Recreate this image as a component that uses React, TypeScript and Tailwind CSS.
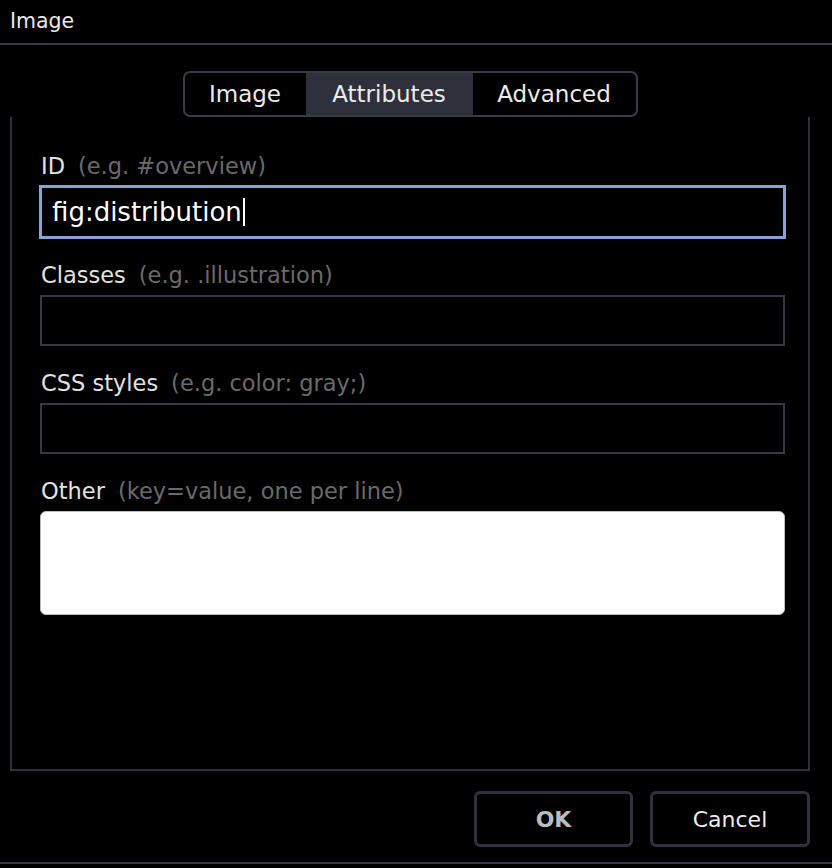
const font = { fontFamily: '"DejaVu Sans", "Liberation Sans", sans-serif' };

const tabs = [
  { label: "Image", w: "w-[121px]", active: false },
  { label: "Attributes", w: "w-[167px]", active: true },
  { label: "Advanced", w: "w-[163px]", active: false },
];

const Label = ({ name, hint }: { name: string; hint: string }) => (
  <div className="h-[28px] leading-[28px] mb-[6px] pl-[1px] text-[22.5px] whitespace-nowrap">
    <span className="text-[#e2e2e2]">{name}</span>
    <span className="ml-[13px] text-[#6a6a6a]">{hint}</span>
  </div>
);

const App = () => {
  return (
    <div className="w-[832px] h-[868px] bg-black overflow-hidden" style={font}>
      {/* title bar */}
      <div className="h-[45px] border-b-2 border-[#383946] pl-[10px] pt-[6px] text-[20.5px] text-[#e8e8e8]">
        Image
      </div>

      <div className="ml-[10px] w-[800px] pt-[26px]">
        <div className="flex justify-center">
          <div className="flex h-[46px] rounded-[7px] border-2 border-[#3a3b47] overflow-hidden">
            {tabs.map((t) => (
              <div
                key={t.label}
                className={`${t.w} flex items-center justify-center text-[23px] text-[#ebebeb] ${t.active ? "bg-[#2e303c]" : ""}`}
              >
                {t.label}
              </div>
            ))}
          </div>
        </div>

        {/* panel */}
        <div className="h-[654px] border-x-2 border-b-2 border-[#2f303b] pt-[35px] pl-[28px] pr-[23px]">
          <Label name="ID" hint="(e.g. #overview)" />
          <div className="-mx-[1px] -mt-[1px] h-[54px] border-[3px] border-[#8aa3d3] flex items-center pl-[10px] text-[26px] text-white">
            <span>fig:distribution</span>
            <span className="w-[2px] h-[28px] bg-white ml-[1px]" />
          </div>

          <div className="mt-[22px]">
            <Label name="Classes" hint="(e.g. .illustration)" />
            <div className="h-[51px] border-2 border-[#383946]" />
          </div>

          <div className="mt-[23px]">
            <Label name="CSS styles" hint="(e.g. color: gray;)" />
            <div className="h-[51px] border-2 border-[#383946]" />
          </div>

          <div className="mt-[23px]">
            <Label name="Other" hint="(key=value, one per line)" />
            <div className="h-[104px] rounded-[6px] bg-white border border-[#bdbdbd]" />
          </div>
        </div>

        {/* buttons */}
        <div className="flex justify-end gap-[17px] mt-[20px]">
          <div className="w-[159px] h-[56px] rounded-[6px] border-[3px] border-[#30313c] flex items-center justify-center text-[22px] font-bold text-[#bcbcbc]">
            OK
          </div>
          <div className="w-[160px] h-[56px] rounded-[6px] border-[3px] border-[#30313c] flex items-center justify-center text-[22px] text-[#ececec]">
            Cancel
          </div>
        </div>
      </div>

      <div className="mt-[15px] h-[2px] bg-[#383946]" />
    </div>
  );
};

export default App;
